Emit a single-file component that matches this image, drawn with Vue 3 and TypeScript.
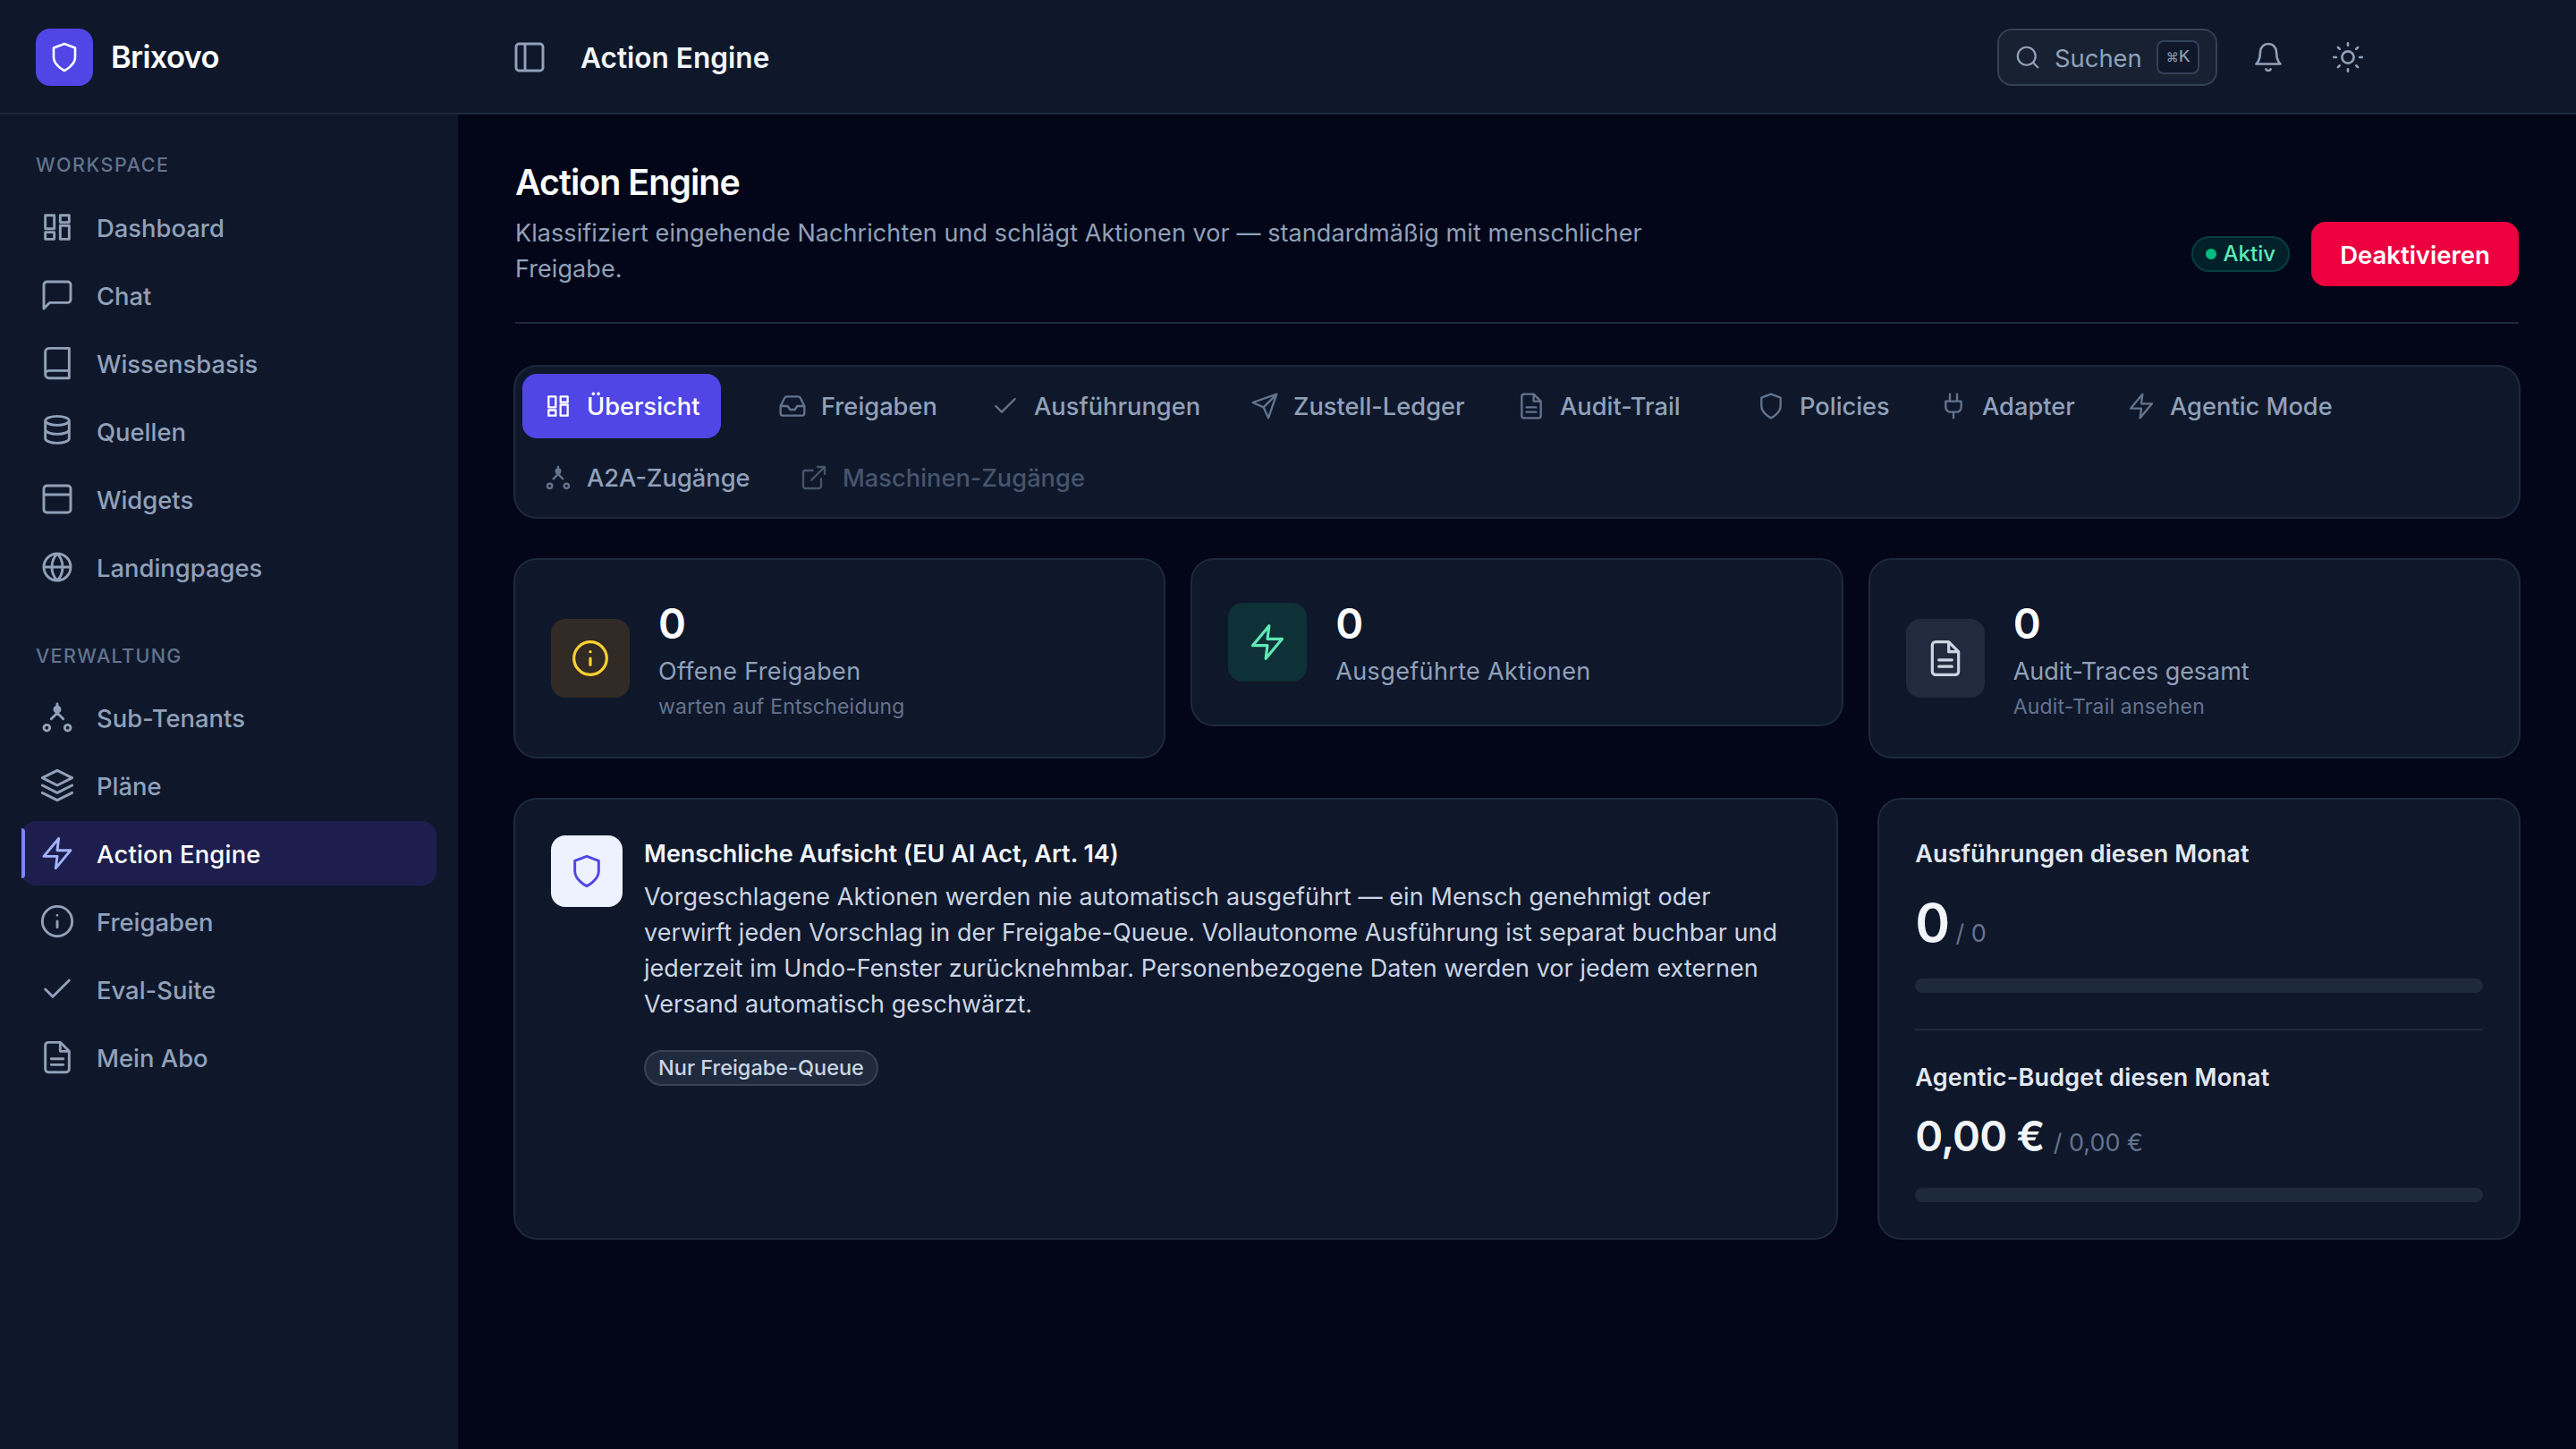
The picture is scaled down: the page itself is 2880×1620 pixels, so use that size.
<script setup lang="ts">
import { h } from 'vue'
import type { FunctionalComponent } from 'vue'

const circle = (cx: number, cy: number, r: number) =>
  `M${cx - r} ${cy}a${r} ${r} 0 1 0 ${2 * r} 0a${r} ${r} 0 1 0 ${-2 * r} 0`

const shapes: Record<string, string> = {
  dashboard: 'M4 4h6v9H4zM14 4h6v4.75h-6zM4 15.4h6V20H4zM14 10.9h6V20h-6z',
  chat: 'M21 15a2 2 0 0 1-2 2H7l-4 4V5a2 2 0 0 1 2-2h14a2 2 0 0 1 2 2z',
  book: 'M4 19.5A2.5 2.5 0 0 1 6.5 17H20M6.5 2H20v20H6.5A2.5 2.5 0 0 1 4 19.5v-15A2.5 2.5 0 0 1 6.5 2z',
  database:
    'M4 5c0 1.66 3.58 3 8 3s8-1.34 8-3-3.58-3-8-3-8 1.34-8 3zM4 5v6c0 1.66 3.58 3 8 3s8-1.34 8-3V5M4 11v6c0 1.66 3.58 3 8 3s8-1.34 8-3v-6',
  window: 'M5 3h14a2 2 0 0 1 2 2v14a2 2 0 0 1-2 2H5a2 2 0 0 1-2-2V5a2 2 0 0 1 2-2zM3 9h18',
  globe: circle(12, 12, 9) + 'M3 12h18M12 3c2.4 2.4 3.6 5.6 3.6 9s-1.2 6.6-3.6 9M12 3c-2.4 2.4-3.6 5.6-3.6 9s1.2 6.6 3.6 9',
  tenants: circle(12, 6.7, 1.8) + circle(5, 19, 2) + circle(19, 19, 2) + 'M12 3v6M12 9l-4 4M12 9l4 4',
  layers: 'M12 2 2 7l10 5 10-5-10-5zM2 17l10 5 10-5M2 12l10 5 10-5',
  zap: 'M13 2 3 14h9l-1 8 10-12h-9l1-8z',
  info: circle(12, 12, 10) + 'M12 16v-4M12 8h.01',
  check: 'M20 6 9 17l-5-5',
  file: 'M14 2H6a2 2 0 0 0-2 2v16a2 2 0 0 0 2 2h12a2 2 0 0 0 2-2V8zM14 2v6h6M16 13H8M16 17H8',
  shield: 'M12 22s8-4 8-10V5l-8-3-8 3v7c0 6 8 10 8 10z',
  inbox:
    'M22 12h-6l-2 3h-4l-2-3H2M5.45 5.11 2 12v6a2 2 0 0 0 2 2h16a2 2 0 0 0 2-2v-6l-3.45-6.89A2 2 0 0 0 16.76 4H7.24a2 2 0 0 0-1.79 1.11z',
  send: 'M22 2 11 13M22 2l-7 20-4-9-9-4z',
  plug: 'M12 22v-5M9 8V2M15 8V2M18.5 8v5a4 4 0 0 1-4 4h-5a4 4 0 0 1-4-4V8z',
  external: 'M18 13v6a2 2 0 0 1-2 2H5a2 2 0 0 1-2-2V8a2 2 0 0 1 2-2h6M15 3h6v6M10 14 21 3',
  panel: 'M5 3h14a2 2 0 0 1 2 2v14a2 2 0 0 1-2 2H5a2 2 0 0 1-2-2V5a2 2 0 0 1 2-2zM9 3v18',
  search: circle(11, 11, 8) + 'M21 21l-4.35-4.35',
  bell: 'M18 8A6 6 0 0 0 6 8c0 7-3 9-3 9h18s-3-2-3-9M13.73 21a2 2 0 0 1-3.46 0',
  sun:
    circle(12, 12, 4.4) +
    'M12 1.5v1.7M12 20.8v1.7M4.6 4.6l1.2 1.2M18.2 18.2l1.2 1.2M1.5 12h1.7M20.8 12h1.7M5.8 18.2l-1.2 1.2M19.4 4.6l-1.2 1.2',
}

const Icon: FunctionalComponent<{ name: string; size: number; stroke?: number }> = (props) =>
  h(
    'svg',
    {
      class: 'icon',
      width: props.size,
      height: props.size,
      viewBox: '0 0 24 24',
      fill: 'none',
      stroke: 'currentColor',
      'stroke-width': props.stroke ?? 1.75,
      'stroke-linecap': 'round',
      'stroke-linejoin': 'round',
    },
    [h('path', { d: shapes[props.name] })],
  )
Icon.props = ['name', 'size', 'stroke']

interface NavItem {
  icon: string
  label: string
  active?: boolean
}

const sections: { title: string; items: NavItem[] }[] = [
  {
    title: 'WORKSPACE',
    items: [
      { icon: 'dashboard', label: 'Dashboard' },
      { icon: 'chat', label: 'Chat' },
      { icon: 'book', label: 'Wissensbasis' },
      { icon: 'database', label: 'Quellen' },
      { icon: 'window', label: 'Widgets' },
      { icon: 'globe', label: 'Landingpages' },
    ],
  },
  {
    title: 'VERWALTUNG',
    items: [
      { icon: 'tenants', label: 'Sub-Tenants' },
      { icon: 'layers', label: 'Pläne' },
      { icon: 'zap', label: 'Action Engine', active: true },
      { icon: 'info', label: 'Freigaben' },
      { icon: 'check', label: 'Eval-Suite' },
      { icon: 'file', label: 'Mein Abo' },
    ],
  },
]

interface Tab {
  icon: string
  label: string
  width: number
  state?: 'active' | 'disabled'
  group?: boolean
}

const tabs: Tab[] = [
  { icon: 'dashboard', label: 'Übersicht', width: 222, state: 'active' },
  { icon: 'inbox', label: 'Freigaben', width: 230, group: true },
  { icon: 'check', label: 'Ausführungen', width: 282 },
  { icon: 'send', label: 'Zustell-Ledger', width: 290 },
  { icon: 'file', label: 'Audit-Trail', width: 228 },
  { icon: 'shield', label: 'Policies', width: 196, group: true },
  { icon: 'plug', label: 'Adapter', width: 202 },
  { icon: 'zap', label: 'Agentic Mode', width: 280 },
  { icon: 'tenants', label: 'A2A-Zugänge', width: 278 },
  { icon: 'external', label: 'Maschinen-Zugänge', width: 364, state: 'disabled' },
]

const stats = [
  { icon: 'info', tone: 'amber', value: '0', label: 'Offene Freigaben', hint: 'warten auf Entscheidung' },
  { icon: 'zap', tone: 'emerald', value: '0', label: 'Ausgeführte Aktionen', hint: '' },
  { icon: 'file', tone: 'slate', value: '0', label: 'Audit-Traces gesamt', hint: 'Audit-Trail ansehen' },
]
</script>

<template>
  <div class="app">
    <header class="topbar">
      <div class="brand">
        <span class="brand-mark"><Icon name="shield" :size="36" /></span>
        <span class="brand-name">Brixovo</span>
      </div>
      <div class="topbar-main">
        <Icon class="muted" name="panel" :size="40" />
        <span class="topbar-title">Action Engine</span>
        <div class="tools">
          <div class="search">
            <Icon name="search" :size="30" />
            <span class="search-label">Suchen</span>
            <kbd class="kbd"><span class="cmd">⌘</span>K</kbd>
          </div>
          <Icon class="muted bell" name="bell" :size="36" />
          <Icon class="muted" name="sun" :size="36" />
        </div>
      </div>
    </header>

    <div class="body">
      <aside class="sidebar">
        <section v-for="s in sections" :key="s.title" class="nav-section">
          <h3 class="nav-title">{{ s.title }}</h3>
          <a v-for="i in s.items" :key="i.label" class="nav-item" :class="{ active: i.active }">
            <Icon :name="i.icon" :size="40" />
            <span>{{ i.label }}</span>
          </a>
        </section>
      </aside>

      <main class="content">
        <div class="page-head">
          <div>
            <h1 class="page-title">Action Engine</h1>
            <p class="page-desc">
              Klassifiziert eingehende Nachrichten und schlägt Aktionen vor — standardmäßig mit menschlicher<br />Freigabe.
            </p>
          </div>
          <div class="page-actions">
            <span class="badge live"><i class="dot"></i>Aktiv</span>
            <button class="danger">Deaktivieren</button>
          </div>
        </div>

        <nav class="tabs">
          <a
            v-for="t in tabs"
            :key="t.label"
            class="tab"
            :class="[t.state, { group: t.group }]"
            :style="{ width: t.width + 'px' }"
          >
            <Icon :name="t.icon" :size="32" />
            <span>{{ t.label }}</span>
          </a>
        </nav>

        <div class="stats">
          <div v-for="s in stats" :key="s.label" class="card stat">
            <span class="stat-icon" :class="s.tone"><Icon :name="s.icon" :size="44" /></span>
            <div>
              <div class="stat-value">{{ s.value }}</div>
              <div class="stat-label">{{ s.label }}</div>
              <div v-if="s.hint" class="stat-hint">{{ s.hint }}</div>
            </div>
          </div>
        </div>

        <div class="panels">
          <div class="card oversight">
            <span class="oversight-icon"><Icon name="shield" :size="40" /></span>
            <div>
              <h2 class="card-title bright">Menschliche Aufsicht (EU AI Act, Art. 14)</h2>
              <p class="oversight-text">
                <span class="lead">Vorgeschlagene Aktionen werden nie automatisch ausgeführt — ein Mensch genehmigt oder</span><br />
                verwirft jeden Vorschlag in der Freigabe-Queue. Vollautonome Ausführung ist separat buchbar und<br />
                jederzeit im Undo-Fenster zurücknehmbar. Personenbezogene Daten werden vor jedem externen<br />
                Versand automatisch geschwärzt.
              </p>
              <span class="badge neutral">Nur Freigabe-Queue</span>
            </div>
          </div>

          <div class="card usage">
            <h2 class="card-title">Ausführungen diesen Monat</h2>
            <div class="amount large"><b>0</b><span>/ 0</span></div>
            <div class="bar"></div>
            <div class="rule"></div>
            <h2 class="card-title wide">Agentic-Budget diesen Monat</h2>
            <div class="amount"><b>0,00 €</b><span>/ 0,00 €</span></div>
            <div class="bar"></div>
          </div>
        </div>
      </main>
    </div>
  </div>
</template>

<style>
body {
  background: #020618;
}
</style>

<style scoped>
.app {
  width: 2880px;
  height: 1620px;
  overflow: hidden;
  display: flex;
  flex-direction: column;
  background: #020618;
  color: #90a1b9;
  font-family: 'Inter', sans-serif;
  font-size: 27px;
  line-height: 40px;
  white-space: nowrap;
}
.app *,
.app {
  box-sizing: border-box;
}
h1,
h2,
h3,
p {
  margin: 0;
}
.icon {
  display: block;
  flex: none;
}

/* top bar */
.topbar {
  height: 128px;
  flex: none;
  display: flex;
  padding-top: 2px;
  background: #0f172b;
  border-bottom: 2px solid #1d293d;
}
.brand {
  width: 512px;
  padding-left: 40px;
  display: flex;
  align-items: center;
  gap: 20px;
}
.brand-mark {
  width: 64px;
  height: 64px;
  border-radius: 16px;
  display: grid;
  place-items: center;
  background: #4f46e5;
  color: #fff;
}
.brand-name {
  color: #fff;
  font-size: 34.5px;
  font-weight: 600;
  letter-spacing: -0.02em;
}
.topbar-main {
  flex: 1;
  display: flex;
  align-items: center;
  padding-left: 60px;
}
.muted {
  color: #90a1b9;
}
.topbar-title {
  margin-left: 37px;
  padding-top: 2px;
  color: #f1f5f9;
  font-size: 31.6px;
  font-weight: 600;
}
.tools {
  margin-left: auto;
  display: flex;
  align-items: center;
  padding-right: 237px;
  gap: 53px;
}
.search {
  width: 246px;
  height: 64px;
  padding: 0 18px 0 17px;
  display: flex;
  align-items: center;
  border: 2px solid #314158;
  border-radius: 16px;
  background: #172132;
}
.search-label {
  margin-left: 15px;
  padding-top: 2px;
  font-size: 27.4px;
}
.kbd {
  margin-left: auto;
  width: 48px;
  height: 38px;
  display: flex;
  align-items: center;
  justify-content: center;
  border: 2px solid #314158;
  border-radius: 8px;
  background: #0f172b;
  font: 500 21px/32px 'Liberation Mono', monospace;
}
.cmd {
  font: 14px/32px 'DejaVu Sans', sans-serif;
}
.bell {
  margin-left: -14px;
}

/* sidebar */
.body {
  flex: 1;
  display: flex;
}
.sidebar {
  width: 512px;
  flex: none;
  padding: 40px 24px;
  background: #0f172b;
}
.nav-title {
  height: 32px;
  margin-bottom: 18px;
  padding-left: 16px;
  color: #62748e;
  font-size: 21.5px;
  font-weight: 500;
  line-height: 32px;
  letter-spacing: 0.072em;
}
.nav-section + .nav-section {
  margin-top: 47px;
}
.nav-section + .nav-section .nav-title {
  margin-bottom: 17px;
  letter-spacing: 0.064em;
}
.nav-item {
  position: relative;
  height: 72px;
  display: flex;
  align-items: center;
  gap: 24px;
  padding-left: 20px;
  border-radius: 16px;
  font-size: 27.4px;
  font-weight: 500;
}
.nav-item span {
  padding-top: 2px;
}
.nav-item + .nav-item {
  margin-top: 4px;
}
.nav-item.active {
  background: #1e1e4e;
  color: #fff;
  letter-spacing: 0.2px;
}
.nav-item.active .icon {
  color: #a3b3ff;
}
.nav-item.active::before {
  content: '';
  position: absolute;
  left: 0;
  top: 8px;
  width: 4px;
  height: 56px;
  border-radius: 0 4px 4px 0;
  background: #7c86ff;
}

/* page head */
.content {
  flex: 1;
  padding: 48px 64px 0;
}
.page-head {
  display: flex;
  align-items: flex-end;
  justify-content: space-between;
  height: 186px;
  padding-bottom: 40px;
  border-bottom: 2px solid #1d293d;
}
.page-title {
  height: 56px;
  margin-bottom: 8px;
  color: #fff;
  font-size: 39.4px;
  font-weight: 600;
  line-height: 56px;
  letter-spacing: -0.025em;
}
.page-desc {
  padding-top: 1px;
  margin-bottom: -1px;
  letter-spacing: 0.07px;
}
.page-actions {
  display: flex;
  align-items: center;
  gap: 24px;
}
.badge {
  display: inline-flex;
  align-items: center;
  height: 40px;
  padding: 0 14px;
  border: 2px solid;
  border-radius: 20px;
  font-size: 23.5px;
  font-weight: 500;
}
.live {
  gap: 8px;
  border-color: #063f3e;
  background: #02202a;
  color: #5ee9b5;
  font-size: 24px;
}
.dot {
  width: 12px;
  height: 12px;
  border-radius: 50%;
  background: #00bc7d;
}
.danger {
  width: 232px;
  height: 72px;
  padding: 1px 0 0;
  border: 0;
  border-radius: 16px;
  background: #ec003f;
  color: #fff;
  font: 600 27.5px/40px 'Inter', sans-serif;
}

/* tabs */
.tabs {
  display: flex;
  flex-wrap: wrap;
  gap: 8px;
  margin-top: 48px;
  padding: 8px;
  border-radius: 24px;
  background: #0f172b;
  box-shadow: 0 0 0 2px #1d293d;
}
.tab {
  height: 72px;
  display: flex;
  align-items: center;
  gap: 16px;
  padding-left: 24px;
  border-radius: 16px;
  font-size: 27.25px;
  font-weight: 500;
}
.tab span {
  padding-top: 2px;
}
.tab.group {
  margin-left: 32px;
}
.tab .icon {
  color: #62748e;
}
.tab.active {
  background: #4f46e5;
  color: #fff;
}
.tab.active .icon {
  color: #fff;
}
.tab.disabled,
.tab.disabled .icon {
  color: #45556c;
}

/* cards */
.card {
  border-radius: 24px;
  background: #0f172b;
  box-shadow: 0 0 0 2px #1d293d;
  padding: 40px;
}
.stats {
  display: grid;
  grid-template-columns: repeat(3, 1fr);
  align-items: start;
  gap: 32px;
  margin-top: 48px;
}
.stat {
  display: flex;
  align-items: center;
  gap: 32px;
}
.stat-icon {
  width: 88px;
  height: 88px;
  border-radius: 16px;
  display: grid;
  place-items: center;
}
.amber {
  background: #322a25;
  color: #ffd230;
}
.emerald {
  background: #0e3037;
  color: #5ee9b5;
}
.slate {
  background: #202b3f;
  color: #cad5e2;
}
.stat-value {
  margin-bottom: 3px;
  color: #fff;
  font-size: 47px;
  font-weight: 600;
  line-height: 62px;
}
.stat-label {
  margin-bottom: -1px;
  letter-spacing: 0.35px;
}
.slate + div .stat-label {
  letter-spacing: -0.05px;
}
.stat-hint {
  margin-top: 4px;
  color: #62748e;
  font-size: 23px;
  line-height: 32px;
  letter-spacing: 0.2px;
}
.panels {
  display: grid;
  grid-template-columns: repeat(3, 1fr);
  gap: 48px;
  margin-top: 48px;
}
.oversight {
  grid-column: span 2;
  display: flex;
  gap: 24px;
}
.oversight-icon {
  width: 80px;
  height: 80px;
  flex: none;
  border-radius: 16px;
  display: grid;
  place-items: center;
  background: #eef2ff;
  color: #4f46e5;
}
.card-title {
  height: 40px;
  padding-top: 1px;
  color: #e2e8f0;
  font-size: 27px;
  font-weight: 600;
  line-height: 40px;
  letter-spacing: 0.07px;
}
.card-title.wide {
  letter-spacing: 0.2px;
}
.card-title.bright {
  color: #f1f5f9;
  letter-spacing: -0.02px;
}
.oversight-text {
  margin-top: 8px;
  padding-top: 1px;
  color: #cad5e2;
  letter-spacing: 0.04px;
}
.lead {
  letter-spacing: 0.09px;
}
.neutral {
  margin-top: 31px;
  border-color: #364359;
  background: #1f2a3e;
  color: #cad5e2;
}
.usage {
  height: 490px;
}
.amount {
  height: 64px;
  margin: 14px 0 26px;
  display: flex;
  align-items: baseline;
  gap: 10px;
  line-height: 64px;
}
.amount b {
  color: #f1f5f9;
  font-size: 47px;
  font-weight: 600;
  letter-spacing: -0.8px;
}
.amount span {
  color: #62748e;
}
.amount.large {
  height: 72px;
  margin-top: 22px;
  gap: 7px;
  line-height: 72px;
}
.amount.large b {
  font-size: 59px;
}
.bar {
  height: 16px;
  border-radius: 8px;
  background: #1d293d;
}
.rule {
  height: 2px;
  margin: 40px 0 32px;
  background: #1d293d;
}
</style>
